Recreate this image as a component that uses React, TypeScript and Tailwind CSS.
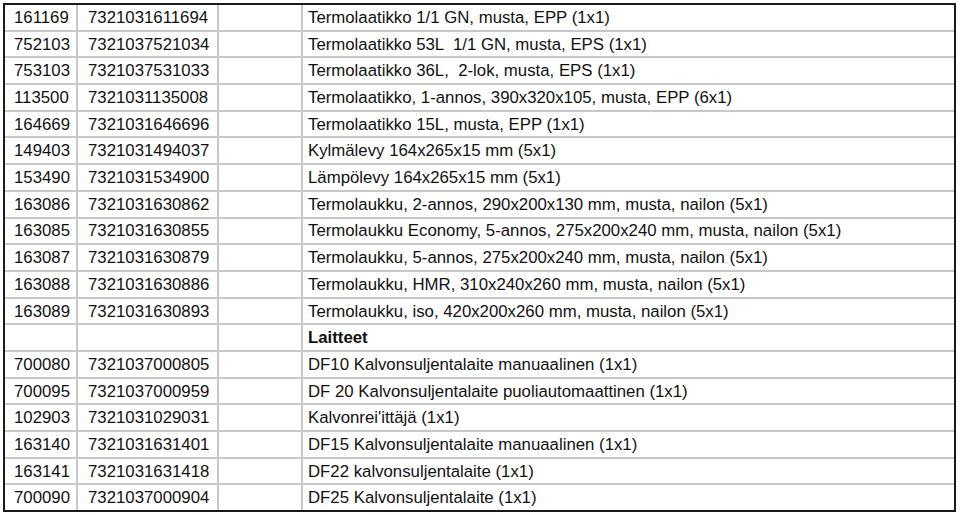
import React from "react";

const rows: [string, string, string, boolean?][] = [
  ["161169", "7321031611694", "Termolaatikko 1/1 GN, musta, EPP (1x1)"],
  ["752103", "7321037521034", "Termolaatikko 53L  1/1 GN, musta, EPS (1x1)"],
  ["753103", "7321037531033", "Termolaatikko 36L,  2-lok, musta, EPS (1x1)"],
  ["113500", "7321031135008", "Termolaatikko, 1-annos, 390x320x105, musta, EPP (6x1)"],
  ["164669", "7321031646696", "Termolaatikko 15L, musta, EPP (1x1)"],
  ["149403", "7321031494037", "Kylmälevy 164x265x15 mm (5x1)"],
  ["153490", "7321031534900", "Lämpölevy 164x265x15 mm (5x1)"],
  ["163086", "7321031630862", "Termolaukku, 2-annos, 290x200x130 mm, musta, nailon (5x1)"],
  ["163085", "7321031630855", "Termolaukku Economy, 5-annos, 275x200x240 mm, musta, nailon (5x1)"],
  ["163087", "7321031630879", "Termolaukku, 5-annos, 275x200x240 mm, musta, nailon (5x1)"],
  ["163088", "7321031630886", "Termolaukku, HMR, 310x240x260 mm, musta, nailon (5x1)"],
  ["163089", "7321031630893", "Termolaukku, iso, 420x200x260 mm, musta, nailon (5x1)"],
  ["", "", "Laitteet", true],
  ["700080", "7321037000805", "DF10 Kalvonsuljentalaite manuaalinen (1x1)"],
  ["700095", "7321037000959", "DF 20 Kalvonsuljentalaite puoliautomaattinen (1x1)"],
  ["102903", "7321031029031", "Kalvonrei'ittäjä (1x1)"],
  ["163140", "7321031631401", "DF15 Kalvonsuljentalaite manuaalinen (1x1)"],
  ["163141", "7321031631418", "DF22 kalvonsuljentalaite (1x1)"],
  ["700090", "7321037000904", "DF25 Kalvonsuljentalaite (1x1)"],
];

export default function App() {
  return (
    <div className="w-[960px] h-[515px] bg-white pt-[3px] pl-[3px]" style={{ fontFamily: '"Liberation Sans", Arial, sans-serif' }}>
      <div className="w-[953px] h-[509px] border-2 border-[#1a1a1a] flex flex-col text-[16.8px] text-[#111] leading-none">
        {rows.map((r, i) => (
          <div
            key={i}
            className={`flex-1 flex items-stretch ${i > 0 ? "border-t-2 border-[#c8c8c8]" : ""}`}
          >
            <div className="w-[73px] flex items-center pl-[9px] pt-[2px] border-r-2 border-[#c8c8c8] whitespace-pre">{r[0]}</div>
            <div className="w-[141px] flex items-center pl-[10px] pt-[2px] border-r-2 border-[#c8c8c8] whitespace-pre">{r[1]}</div>
            <div className="w-[84px] border-r-2 border-[#c8c8c8]"></div>
            <div className={`flex-1 flex items-center pl-[5px] pt-[2px] whitespace-pre ${r[3] ? "font-bold" : ""}`}>{r[2]}</div>
          </div>
        ))}
      </div>
    </div>
  );
}
